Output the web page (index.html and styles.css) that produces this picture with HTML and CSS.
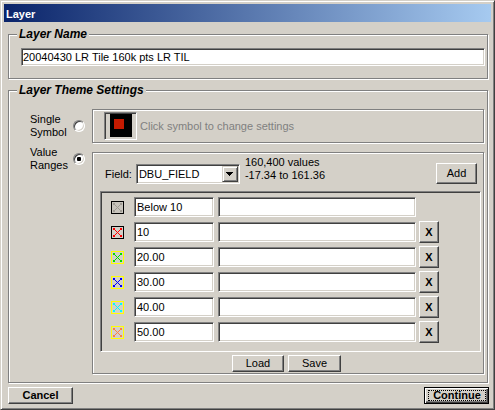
FILE: index.html
```html
<!DOCTYPE html>
<html>
<head>
<meta charset="utf-8">
<title>Layer</title>
<link rel="stylesheet" href="styles.css">
</head>
<body>
<div class="window">
  <div class="titlebar">Layer</div>
  <div class="client">
    <div class="group group-name">
      <div class="legend">Layer Name</div>
      <div class="field name-field">20040430 LR Tile 160k pts LR TIL</div>
    </div>
    <div class="group group-theme">
      <div class="legend">Layer Theme Settings</div>
      <div class="opt-row opt-single">
        <div class="opt-choice">
          <div class="opt-label">Single<br>Symbol</div>
          <span class="radio"></span>
        </div>
        <div class="panel single-panel">
          <div class="symbtn"><div class="sym-black"><div class="sym-red"></div></div></div>
          <span class="hint">Click symbol to change settings</span>
        </div>
      </div>
      <div class="opt-row opt-ranges">
        <div class="opt-choice">
          <div class="opt-label">Value<br>Ranges</div>
          <span class="radio"><span class="dot"></span></span>
        </div>
        <div class="panel ranges-panel">
          <div class="ranges-head">
            <span class="field-label">Field:</span>
            <div class="field combo">
              <span class="combo-text">DBU_FIELD</span>
              <span class="combo-btn"><svg width="7" height="4" viewBox="0 0 7 4" shape-rendering="crispEdges"><path d="M0 0h7v1h-1v1h-1v1h-1v1h-1v-1h-1v-1h-1v-1h-1z" fill="#000"/></svg></span>
            </div>
            <div class="stats">160,400 values<br>-17.34 to 161.36</div>
            <div class="btn add-btn">Add</div>
          </div>
          <div class="field ranges-list">
            <div class="rrow">
              <svg class="sym" width="13" height="13" viewBox="0 0 13 13" shape-rendering="crispEdges"><rect x="0.5" y="0.5" width="12" height="12" fill="#c8c4bc" stroke="#000"/><path d="M2.5 2.5L10.5 10.5M10.5 2.5L2.5 10.5" stroke="#a09c94" fill="none"/><path d="M2 2h2v2h-2zM9 2h2v2h-2zM2 9h2v2h-2zM9 9h2v2h-2z" fill="#a09c94"/></svg>
              <div class="field val">Below 10</div>
              <div class="field lbl"></div>
            </div>
            <div class="rrow">
              <svg class="sym" width="13" height="13" viewBox="0 0 13 13" shape-rendering="crispEdges"><rect x="0.5" y="0.5" width="12" height="12" fill="#d4d0c8" stroke="#000"/><path d="M2.5 2.5L10.5 10.5M10.5 2.5L2.5 10.5" stroke="#ff0000" fill="none"/><path d="M2 2h2v2h-2zM9 2h2v2h-2zM2 9h2v2h-2zM9 9h2v2h-2z" fill="#ff0000"/></svg>
              <div class="field val">10</div>
              <div class="field lbl"></div>
              <div class="btn xbtn">X</div>
            </div>
            <div class="rrow">
              <svg class="sym" width="13" height="13" viewBox="0 0 13 13" shape-rendering="crispEdges"><rect x="0.5" y="0.5" width="12" height="12" fill="#d4d0c8" stroke="#ffff00"/><path d="M2.5 2.5L10.5 10.5M10.5 2.5L2.5 10.5" stroke="#00e000" fill="none"/><path d="M2 2h2v2h-2zM9 2h2v2h-2zM2 9h2v2h-2zM9 9h2v2h-2z" fill="#00e000"/></svg>
              <div class="field val">20.00</div>
              <div class="field lbl"></div>
              <div class="btn xbtn">X</div>
            </div>
            <div class="rrow">
              <svg class="sym" width="13" height="13" viewBox="0 0 13 13" shape-rendering="crispEdges"><rect x="0.5" y="0.5" width="12" height="12" fill="#d4d0c8" stroke="#ffff00"/><path d="M2.5 2.5L10.5 10.5M10.5 2.5L2.5 10.5" stroke="#0000ff" fill="none"/><path d="M2 2h2v2h-2zM9 2h2v2h-2zM2 9h2v2h-2zM9 9h2v2h-2z" fill="#0000ff"/></svg>
              <div class="field val">30.00</div>
              <div class="field lbl"></div>
              <div class="btn xbtn">X</div>
            </div>
            <div class="rrow">
              <svg class="sym" width="13" height="13" viewBox="0 0 13 13" shape-rendering="crispEdges"><rect x="0.5" y="0.5" width="12" height="12" fill="#d4d0c8" stroke="#ffff00"/><path d="M2.5 2.5L10.5 10.5M10.5 2.5L2.5 10.5" stroke="#00ffff" fill="none"/><path d="M2 2h2v2h-2zM9 2h2v2h-2zM2 9h2v2h-2zM9 9h2v2h-2z" fill="#00ffff"/></svg>
              <div class="field val">40.00</div>
              <div class="field lbl"></div>
              <div class="btn xbtn">X</div>
            </div>
            <div class="rrow">
              <svg class="sym" width="13" height="13" viewBox="0 0 13 13" shape-rendering="crispEdges"><rect x="0.5" y="0.5" width="12" height="12" fill="#d4d0c8" stroke="#ffff00"/><path d="M2.5 2.5L10.5 10.5M10.5 2.5L2.5 10.5" stroke="#ff8040" fill="none"/><path d="M2 2h2v2h-2zM9 2h2v2h-2zM2 9h2v2h-2zM9 9h2v2h-2z" fill="#ff8040"/></svg>
              <div class="field val">50.00</div>
              <div class="field lbl"></div>
              <div class="btn xbtn">X</div>
            </div>
          </div>
          <div class="ranges-foot">
            <div class="btn load-btn">Load</div>
            <div class="btn save-btn">Save</div>
          </div>
        </div>
      </div>
    </div>
    <div class="dialog-buttons">
      <div class="btn cancel-btn">Cancel</div>
      <div class="btn btn-default"><span class="focus">Continue</span></div>
    </div>
  </div>
</div>
</body>
</html>
```
FILE: styles.css
```css
* { box-sizing: border-box; }
html, body { margin: 0; padding: 0; }
body {
  background: #d4d0c8;
  font-family: "Liberation Sans", Arial, sans-serif;
  font-size: 11px;
  color: #000;
}
.window {
  width: 495px;
  height: 410px;
  border: 1px solid;
  border-color: #d4d0c8 #404040 #404040 #d4d0c8;
  box-shadow: inset 1px 1px #fff, inset -1px -1px #808080;
  padding: 3px;
  background: #d4d0c8;
  overflow: hidden;
}
.titlebar {
  height: 18px;
  background: linear-gradient(to right, #0a246a, #a6caf0);
  color: #fff;
  font-weight: bold;
  font-size: 11px;
  line-height: 16px;
  padding: 2px 0 0 2px;
}
.client { padding: 0 3px 0 4px; }

.group {
  position: relative;
  border: 1px solid #808080;
  box-shadow: 1px 1px 0 #fff, inset 1px 1px 0 #fff;
}
.legend {
  position: absolute;
  left: 8px;
  top: -8px;
  padding: 0 2px;
  background: #d4d0c8;
  font-weight: bold;
  font-style: italic;
  font-size: 12px;
  line-height: 14px;
  white-space: nowrap;
}
.group-name {
  margin-top: 12px;
  height: 45px;
  padding: 13px 2px 0 12px;
}
.field {
  background: #fff;
  border: 1px solid;
  border-color: #808080 #fff #fff #808080;
  box-shadow: inset 1px 1px #404040, inset -1px -1px #d4d0c8;
  white-space: nowrap;
  overflow: hidden;
}
.name-field {
  height: 18px;
  line-height: 16px;
  padding-left: 1px;
}

.group-theme {
  margin-top: 11px;
  height: 293px;
  padding: 18px 3px 8px 21px;
}
.opt-row { display: flex; }
.opt-single { height: 34px; align-items: center; }
.opt-ranges { margin-top: 9px; align-items: flex-start; }
.opt-choice {
  display: flex;
  align-items: center;
  width: 55px;
  margin-right: 7px;
  flex: none;
}
.opt-ranges .opt-choice { margin-top: -6px; }
.opt-label { width: 43px; line-height: 13px; }
.radio {
  width: 12px;
  height: 12px;
  flex: none;
  border-radius: 50%;
  border: 1px solid;
  border-color: #808080 #fff #fff #808080;
  box-shadow: inset 1px 1px #404040, inset -1px -1px #d4d0c8;
  background: #fff;
  display: flex;
  align-items: center;
  justify-content: center;
}
.dot { width: 4px; height: 4px; background: #000; border-radius: 1px; }

.panel {
  flex: 1;
  border: 1px solid #808080;
  box-shadow: 1px 1px 0 #fff, inset 1px 1px 0 #fff;
}
.single-panel {
  height: 34px;
  display: flex;
  align-items: center;
  padding-left: 11px;
}
.symbtn {
  flex: none;
  width: 33px;
  height: 28px;
  border: 1px solid;
  border-color: #808080 #fff #fff #808080;
  box-shadow: inset 1px 1px #404040, inset -1px -1px #d4d0c8;
  padding: 1px 0 0 5px;
}
.sym-black {
  width: 22px;
  height: 23px;
  background: #000;
  padding: 5px 0 0 4px;
}
.sym-red { width: 10px; height: 10px; background: #c41a00; }
.hint { color: #808080; margin-left: 3px; white-space: nowrap; }

.ranges-panel {
  height: 222px;
  display: flex;
  flex-direction: column;
}
.ranges-head {
  height: 38px;
  flex: none;
  display: flex;
  align-items: flex-start;
  padding: 10px 6px 0 12px;
}
.field-label { line-height: 20px; margin-top: 1px; margin-right: 4px; }
.combo {
  width: 104px;
  height: 20px;
  margin-top: 1px;
  display: flex;
  justify-content: space-between;
  padding: 1px;
}
.combo-text { line-height: 16px; padding-left: 1px; }
.combo-btn {
  width: 16px;
  height: 16px;
  flex: none;
  background: #d4d0c8;
  border: 1px solid;
  border-color: #d4d0c8 #404040 #404040 #d4d0c8;
  box-shadow: inset 1px 1px #fff, inset -1px -1px #808080;
  display: flex;
  align-items: center;
  justify-content: center;
}
.combo-btn svg { display: block; }
.stats { margin-left: 5px; margin-top: -7px; line-height: 13px; white-space: nowrap; }
.add-btn { margin-left: auto; width: 41px; height: 21px; }

.ranges-list {
  height: 161px;
  flex: none;
  margin: 0 2px 0 7px;
  padding: 5px 0 0 10px;
  display: flex;
  flex-direction: column;
  gap: 5px;
  background: #d4d0c8;
  border-color: #808080 #fff #fff #808080;
  box-shadow: inset 1px 1px #404040, inset -1px -1px #d4d0c8;
  overflow: visible;
}
.rrow { display: flex; align-items: center; height: 20px; }
.sym { flex: none; margin-right: 10px; display: block; }
.val { width: 80px; height: 20px; line-height: 18px; padding-left: 2px; flex: none; }
.lbl { width: 198px; height: 20px; margin-left: 4px; flex: none; }
.xbtn {
  width: 20px;
  height: 22px;
  margin-left: 3px;
  font-weight: bold;
  font-size: 11px;
}

.ranges-foot {
  margin-top: 3px;
  display: flex;
  justify-content: center;
  gap: 4px;
  padding-right: 3px;
}
.load-btn { width: 52px; height: 17px; }
.save-btn { width: 53px; height: 17px; }

.btn {
  flex: none;
  display: flex;
  align-items: center;
  justify-content: center;
  background: #d4d0c8;
  border: 1px solid;
  border-color: #fff #404040 #404040 #fff;
  box-shadow: inset -1px -1px #808080;
  line-height: 13px;
  white-space: nowrap;
}

.dialog-buttons {
  margin-top: 4px;
  display: flex;
  justify-content: space-between;
}
.cancel-btn { width: 65px; height: 17px; font-weight: bold; }
.btn-default {
  width: 65px;
  height: 17px;
  margin-right: -1px;
  border: 1px solid #000;
  box-shadow: inset 1px 1px #fff, inset -1px -1px #404040, inset -2px -2px #808080;
  font-weight: bold;
  align-items: stretch;
}
.focus {
  flex: 1;
  margin: 2px 2px 2px 3px;
  border: 1px dotted #000;
  display: flex;
  align-items: center;
  justify-content: center;
  line-height: 9px;
}
```
